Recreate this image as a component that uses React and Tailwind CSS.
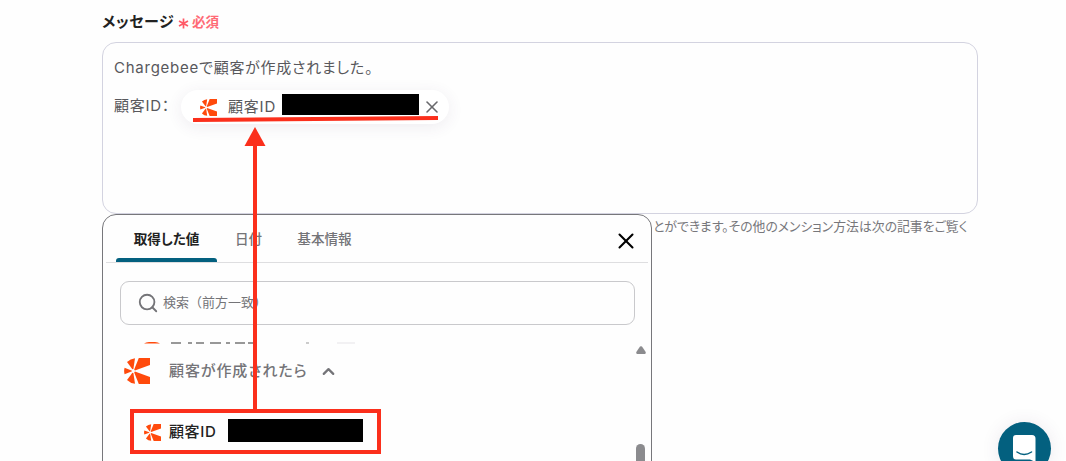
import React, { useState } from "react";
import { ChevronUp, Search, X } from "lucide-react";

const tabs = [
  { label: "取得した値", className: "w-[101px]" },
  { label: "日付", className: "w-[63px]" },
  { label: "基本情報", className: "w-[89px]" },
];

const ChargebeeIcon = ({ className }) => (
  <svg className={className} viewBox="0 0 26 26" fill="#ff4a0c">
    <path d="M10.2 11.4 14.8 0H26V7L10.9 12.4Z" />
    <path d="M10.2 14.6 14.8 26H26V19L10.9 13.6Z" />
    <path d="M8.4 11.2 3 4Q6.4 0.8 11 0.2L9.4 11Z" />
    <path d="M8.4 14.8 3 22Q6.4 25.2 11 25.8L9.4 15Z" />
    <path d="M8 12.7 0.6 9.8Q-0.4 13 0.6 16.2L8 13.3Z" />
  </svg>
);

const MessageField = () => (
  <div className="w-[876px]">
    <div className="flex h-[42px] items-center">
      <span className="mt-[2px] w-[73px] whitespace-nowrap text-[15px] font-bold tracking-[0.6px] text-[#222]">
        メッセージ
      </span>
      <svg className="ml-[3px] mt-[5px] h-[11px] w-[11px]" viewBox="0 0 11 11" fill="none" stroke="#ff5a67" strokeWidth="1.7">
        <path d="M5.5 0.5V10.5M1 3 10 8M10 3 1 8" />
      </svg>
      <span className="ml-[3px] mt-[2px] text-[13.5px] font-bold text-[#ff6b76]">必須</span>
    </div>
    <div className="h-[172px] rounded-[14px] border border-[#d3d3e0] px-[11px] pt-[13px] text-[15px] text-[#58585c]">
      <p className="h-[24px] leading-[24px] tracking-[0.75px]">
        Chargebeeで顧客が作成されました。
      </p>
      <div className="mt-[10px] flex h-[34px] items-center">
        <span className="-mt-[2px] w-[67px] whitespace-nowrap tracking-[0.7px]">顧客ID：</span>
        <div className="flex h-[34px] w-[268px] items-center rounded-[17px] bg-white pl-[19px] shadow-[0_3px_16px_rgba(80,50,100,0.09)]">
          <ChargebeeIcon className="h-[17px] w-[17px]" />
          <span className="ml-[11px] w-[54px] tracking-[0.8px]">顧客ID</span>
          <span className="mb-[5px] h-[21px] w-[137px] bg-black" />
          <X className="ml-[3px] h-[20px] w-[20px] text-[#68686c]" strokeWidth={1.9} />
        </div>
      </div>
    </div>
    <p className="mt-[3px] whitespace-nowrap pl-[551px] text-[12.85px] leading-[20px] text-[#77777b]">
      とができます。その他のメンション方法は次の記事をご覧く
    </p>
  </div>
);

const ValuePicker = () => {
  const [active, setActive] = useState(0);

  return (
    <div className="absolute left-[102px] top-[214px] h-[260px] w-[550px] rounded-t-[14px] border border-[#77777b] bg-[#fefefe]">
      <div className="mx-[3px] flex h-[48px] items-stretch border-b border-[#dedee0] pl-[10px]">
        {tabs.map((tab, i) => (
          <button
            key={tab.label}
            onClick={() => setActive(i)}
            className={`flex flex-col items-center ${tab.className} ${
              i === active ? "font-bold text-[#222]" : "font-medium text-[#747478]"
            }`}
          >
            <span className="mt-[14px] h-[29px] whitespace-nowrap text-[13.6px] leading-[20px]">
              {tab.label}
            </span>
            {i === active && (
              <span className="h-[4px] w-full rounded-t-[3px] bg-[#03607f]" />
            )}
          </button>
        ))}
        <button className="ml-auto mr-[9px] mt-[4px] text-black">
          <X className="h-[26px] w-[26px]" strokeWidth={1.9} />
        </button>
      </div>

      <label className="ml-[17px] mt-[18px] flex h-[44px] w-[515px] items-center rounded-[9px] border border-[#c9c9cc] pl-[16px]">
        <Search className="h-[22px] w-[22px] text-[#747478]" strokeWidth={2} />
        <input
          placeholder="検索（前方一致）"
          className="ml-[4px] w-[300px] bg-transparent text-[13px] outline-none [font-feature-settings:normal] placeholder:text-[#747478]"
        />
      </label>

      <div className="flex pl-[20px] pt-[16px]">
        <div className="w-[513px]">
          {/* edge of the row scrolled away under the group heading */}
          <svg className="block h-[3px] w-[240px]" viewBox="0 0 240 3">
            <path d="M21 2.6Q23 1 26 1H32Q35 1 37 2.6Z" fill="#ff4a0c" />
            <path
              d="M48 2H58M65 2H69M73 2H81M87 2H98M103 2H107M112 2H122M125 2H132"
              stroke="#333"
              strokeWidth="1.2"
            />
            <path d="M183 2H186" stroke="#999" strokeWidth="1" />
            <path d="M214 2H232" stroke="#e6e4e8" strokeWidth="1" />
          </svg>
          <div className="flex h-[54px] items-center pl-[1px]">
            <ChargebeeIcon className="h-[26px] w-[26px]" />
            <span className="ml-[19px] w-[150px] whitespace-nowrap text-[15px] font-medium tracking-[0.9px] text-[#747478]">
              顧客が作成されたら
            </span>
            <ChevronUp className="h-[19px] w-[19px] text-[#747478]" strokeWidth={2.8} />
          </div>
          <div className="ml-[4px] mt-[13px] flex h-[43px] w-[253px] items-center pl-[17px]">
            <ChargebeeIcon className="h-[17px] w-[17px]" />
            <span className="ml-[8px] w-[59px] text-[15px] font-medium tracking-[0.6px] text-[#222]">
              顧客ID
            </span>
            <span className="-mt-[4px] h-[23px] w-[135px] bg-black" />
          </div>
        </div>
        <div className="flex h-[130px] w-[9px] flex-col items-center pt-[5px]">
          <svg className="h-[8px] w-[10px] shrink-0" viewBox="0 0 10 8" fill="#8b8b8e">
            <path d="M4 0.6Q5 -0.2 6 0.6L9.7 6Q10 7.6 9 8H1Q0 7.6 0.3 6Z" />
          </svg>
          <span className="mt-[90px] h-[40px] w-[9px] shrink-0 rounded-t-full bg-[#8b8b8e]" />
        </div>
      </div>
    </div>
  );
};

const Annotations = () => (
  <svg className="pointer-events-none absolute inset-0 h-[461px] w-[1066px]" fill="#fb2f1c">
    <path d="M193 118 438 116V120L193 122Z" />
    <path d="M255 127 265.5 146H244.5Z" />
    <rect x="253" y="144" width="4" height="266" />
    <rect x="132" y="411" width="247" height="41" fill="none" stroke="#fb2f1c" strokeWidth="4" />
  </svg>
);

const App = () => (
  <div className="relative h-[461px] w-[1066px] overflow-hidden bg-[#fefefe] pl-[102px] font-['Inter','Noto_Sans_CJK_JP',sans-serif] [font-feature-settings:'palt']">
    <MessageField />
    <ValuePicker />
    <button className="absolute left-[998px] top-[422px] flex h-[53px] w-[53px] justify-center rounded-full bg-[#03607f] pt-[12px] shadow-[0_1px_18px_rgba(80,50,100,0.1)]">
      <svg className="h-[29px] w-[25px]" viewBox="0 0 25 29">
        <path d="M4 1H20Q23.5 1 23.5 4.5V28L18 25.5H4Q1 25.5 1 22V4Q1 1 4 1Z" fill="white" />
        <path d="M5 18Q12 23 19.5 18" fill="none" stroke="#03607f" strokeWidth="1.5" strokeLinecap="round" />
      </svg>
    </button>
    <Annotations />
  </div>
);

export default App;
